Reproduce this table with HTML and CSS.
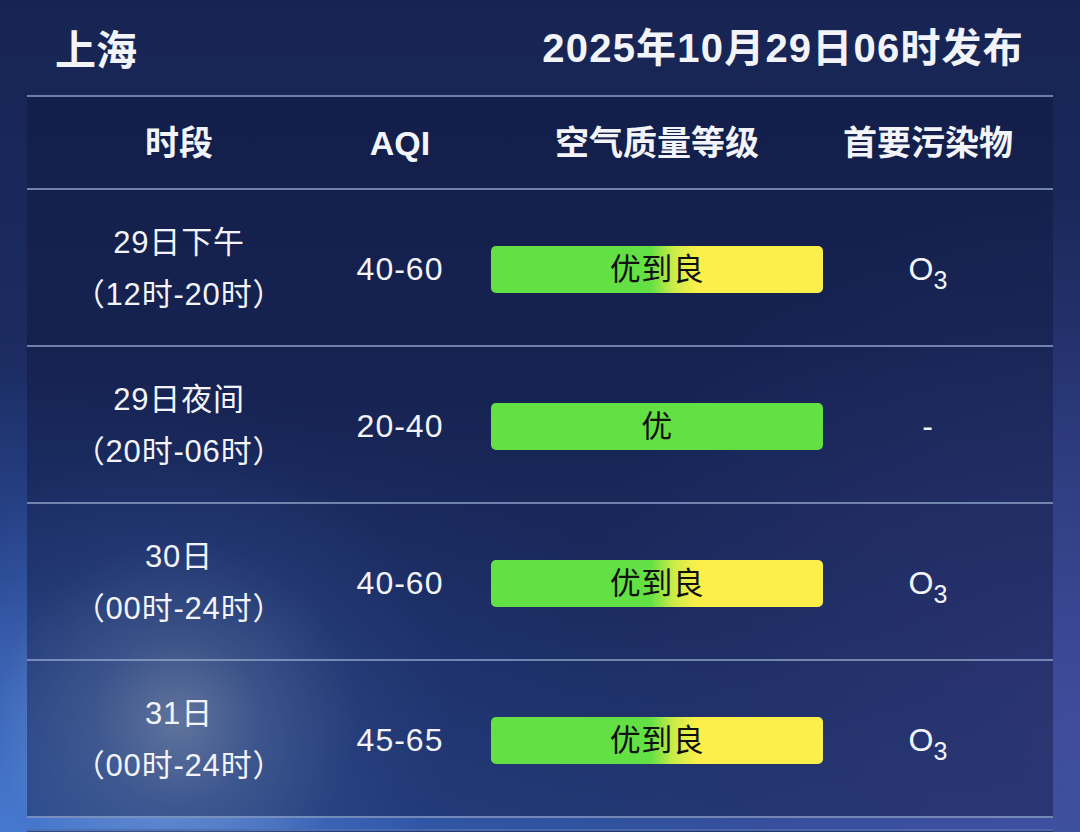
FILE: index.html
```html
<!DOCTYPE html>
<html lang="zh-CN">
<head>
<meta charset="utf-8">
<title>上海 空气质量预报</title>
<link rel="stylesheet" href="styles.css">
</head>
<body>
<div class="page">
  <header class="head">
    <h1 class="city">上海</h1>
    <div class="issued">2025年10月29日06时发布</div>
  </header>
  <section class="table">
    <div class="row row-head">
      <div class="cell">时段</div>
      <div class="cell">AQI</div>
      <div class="cell">空气质量等级</div>
      <div class="cell">首要污染物</div>
    </div>
    <div class="row">
      <div class="cell period"><span>29日下午</span><span>（12时-20时）</span></div>
      <div class="cell num">40-60</div>
      <div class="cell"><div class="bar bar-mix">优到良</div></div>
      <div class="cell num"><span class="chem">O<sub>3</sub></span></div>
    </div>
    <div class="row">
      <div class="cell period"><span>29日夜间</span><span>（20时-06时）</span></div>
      <div class="cell num">20-40</div>
      <div class="cell"><div class="bar bar-good">优</div></div>
      <div class="cell num">-</div>
    </div>
    <div class="row">
      <div class="cell period"><span>30日</span><span>（00时-24时）</span></div>
      <div class="cell num">40-60</div>
      <div class="cell"><div class="bar bar-mix">优到良</div></div>
      <div class="cell num"><span class="chem">O<sub>3</sub></span></div>
    </div>
    <div class="row">
      <div class="cell period"><span>31日</span><span>（00时-24时）</span></div>
      <div class="cell num">45-65</div>
      <div class="cell"><div class="bar bar-mix">优到良</div></div>
      <div class="cell num"><span class="chem">O<sub>3</sub></span></div>
    </div>
  </section>
  <div class="next-card"></div>
</div>
</body>
</html>
```

FILE: styles.css
```css
html, body {
  margin: 0;
  padding: 0;
  height: 100%;
}

body {
  width: 1080px;
  height: 832px;
  overflow: hidden;
  font-family: "Liberation Sans", "Noto Sans CJK SC", sans-serif;
  color: #f2f4fa;
  background:
    radial-gradient(circle at 178px 720px, rgba(180, 205, 240, 0.8) 0, rgba(130, 165, 225, 0.52) 85px, rgba(80, 120, 200, 0.22) 180px, rgba(60, 100, 180, 0) 275px),
    radial-gradient(ellipse 760px 460px at 0 832px, rgba(70, 125, 215, 0.9), rgba(50, 95, 185, 0.4) 55%, rgba(40, 80, 170, 0) 100%),
    radial-gradient(ellipse 520px 520px at 1080px 720px, rgba(75, 80, 165, 0.65), rgba(60, 70, 150, 0) 100%),
    linear-gradient(to bottom, #172453 0%, #1b2b60 40%, #253b7c 75%, #30509a 100%);
}

.page {
  padding-left: 27px;
  width: 1026px;
}

.head {
  height: 95px;
  display: flex;
  align-items: center;
  justify-content: space-between;
  padding: 0 29px 0 28px;
}

.city {
  margin: 0;
  font-family: "Noto Sans CJK SC", sans-serif;
  font-size: 41px;
  font-weight: 700;
  line-height: 1;
}

.issued {
  font-family: "Liberation Sans", "Noto Sans CJK SC", sans-serif;
  font-size: 40px;
  font-weight: 700;
  letter-spacing: 1.2px;
  line-height: 1;
}

.table {
  background: rgba(14, 22, 58, 0.42);
  border-top: 2px solid rgba(150, 170, 210, 0.7);
}

.row {
  display: grid;
  grid-template-columns: 304px 138px 376px 166px 1fr;
  height: 155px;
  border-bottom: 2px solid rgba(150, 170, 210, 0.7);
}

.row-head {
  height: 91px;
}

.cell {
  display: flex;
  flex-direction: column;
  align-items: center;
  justify-content: center;
  text-align: center;
  font-size: 32px;
  line-height: 52px;
  white-space: nowrap;
}

.row-head .cell {
  font-family: "Liberation Sans", "Noto Sans CJK SC", sans-serif;
  font-weight: 700;
  font-size: 34px;
  padding-bottom: 0;
}

.period {
  padding-top: 3px;
  letter-spacing: 0.8px;
  font-size: 31px;
}

.period span {
  display: block;
}

.num {
  font-size: 32px;
  letter-spacing: 1px;
  padding-top: 3px;
}

.chem {
  display: inline-block;
  white-space: nowrap;
  letter-spacing: 0;
}

.chem sub {
  font-size: 25px;
  line-height: 0;
  vertical-align: -9px;
}

.bar {
  width: 332px;
  height: 47px;
  border-radius: 5px;
  color: #111;
  font-size: 31px;
  line-height: 47px;
  text-align: center;
  letter-spacing: 0.5px;
  margin-top: 3px;
}

.bar-good {
  background: #63e044;
}

.bar-mix {
  background: linear-gradient(to right, #63e044 0%, #63e044 48%, #cbec48 55%, #fcef4a 62%, #fdef4b 100%);
}

.next-card {
  margin-top: 11px;
  height: 40px;
  background: rgba(14, 22, 58, 0.45);
  border-top: 2px solid rgba(110, 150, 220, 0.5);
}
```
